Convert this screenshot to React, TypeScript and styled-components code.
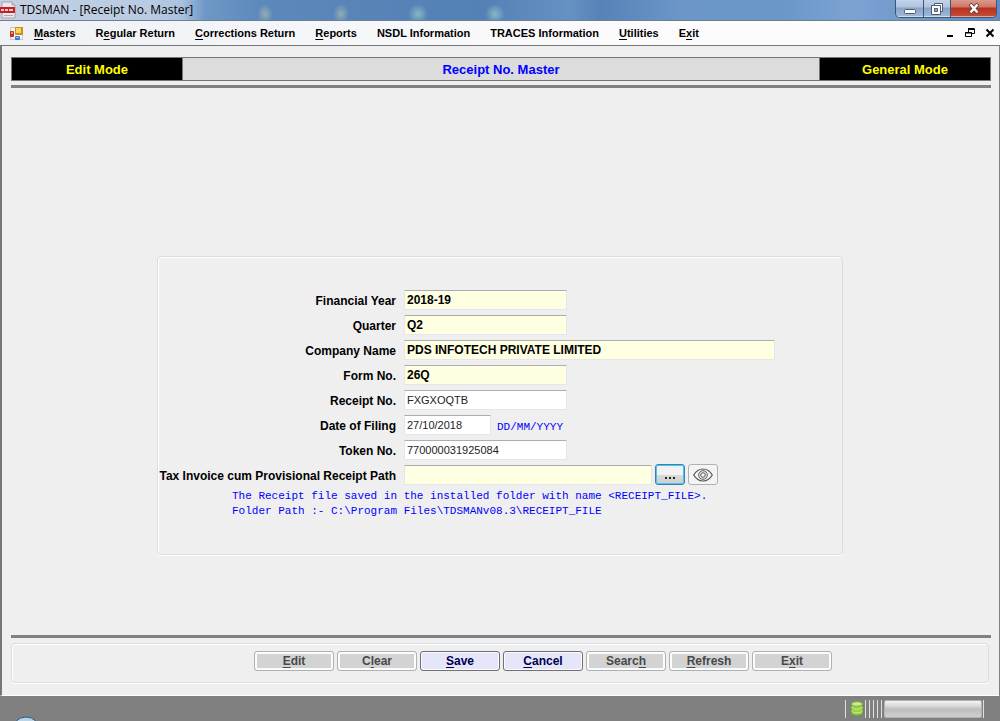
import React from "react";
import styled, { createGlobalStyle, css } from "styled-components";

const Global = createGlobalStyle`
  *, *::before, *::after { box-sizing: border-box; }
  body {
    margin: 0;
    background: #808080;
    font-family: "Liberation Sans", Arial, sans-serif;
    font-size: 12px;
    color: #000;
  }
  button, input { font: inherit; margin: 0; }
`;

const Window = styled.div`
  min-height: 100vh;
  display: flex;
  flex-direction: column;
`;

const TitleBar = styled.header`
  height: 21px;
  display: flex;
  align-items: flex-start;
  justify-content: space-between;
  border-bottom: 1px solid #6c7f95;
  background:
    radial-gradient(ellipse 8px 10px at 265px 14px, rgba(170, 190, 175, 0.7), transparent),
    radial-gradient(ellipse 8px 10px at 341px 14px, rgba(170, 190, 175, 0.7), transparent),
    radial-gradient(ellipse 10px 10px at 418px 14px, rgba(150, 195, 200, 0.8), transparent),
    radial-gradient(ellipse 10px 10px at 495px 14px, rgba(150, 195, 200, 0.8), transparent),
    linear-gradient(90deg, #c3d0e2 0, #b9cbe2 150px, #a9c1de 182px, #6f98c6 205px, #5c88bb 260px, #5380b5 480px, #6691c3 570px, #5682b8 600px, #6c96c8 680px, #6a96c8 780px, #7ba3d2 850px, #5f8cc2 100%);
`;

const Caption = styled.div`
  display: flex;
  align-items: center;
  gap: 4px;
  height: 20px;
  font-family: "Open Sans", "Noto Sans", sans-serif;
  font-size: 12px;
  line-height: 20px;
  white-space: nowrap;
`;

const WindowButtons = styled.div`
  display: flex;
  height: 18px;
  margin-right: 3px;
  border: 1px solid #3f5672;
  border-top: 0;
  border-radius: 0 0 5px 5px;
  overflow: hidden;
`;

const WindowButton = styled.button<{ $kind?: "close" }>`
  width: ${(p) => (p.$kind === "close" ? 46 : 27)}px;
  padding: 0;
  border: 0;
  display: flex;
  align-items: center;
  justify-content: center;
  box-shadow: inset 0 -1px 0 rgba(255, 255, 255, 0.5);
  background: ${(p) =>
    p.$kind === "close"
      ? "linear-gradient(#dc9a8c 0, #cf7767 7px, #b9301c 8px, #c84e38 100%)"
      : "linear-gradient(#c3d3e8 0, #b0c5df 7px, #87a4c8 8px, #a2bad8 100%)"};
  & + & { border-left: 1px solid #3f5672; }
`;

const MenuBar = styled.nav`
  height: 25px;
  display: flex;
  align-items: center;
  justify-content: space-between;
  padding: 0 3px 0 9px;
  background: linear-gradient(90deg, #eff1f5, #fcfcfd 70%);
  border-bottom: 1px solid #767676;
`;

const MenuItems = styled.div`
  display: flex;
  align-items: center;
`;

const MenuItem = styled.button`
  padding: 0 10px;
  border: 0;
  background: none;
  font-size: 11px;
  font-weight: 700;
  line-height: 20px;
  white-space: nowrap;
`;

const Mnemonic = styled.u`
  text-underline-offset: 2px;
`;

const ChildButtons = styled.div`
  display: flex;
  gap: 6px;
`;

const ChildButton = styled.button`
  width: 14px;
  height: 14px;
  padding: 0;
  border: 0;
  background: none;
  display: flex;
  align-items: center;
  justify-content: center;
`;

const Client = styled.main`
  flex: 1;
  display: flex;
  flex-direction: column;
  margin-right: 1px;
  padding: 11px 8px 12px 9px;
  background: #efefef;
  border-left: 2px solid #767676;
  border-bottom: 1px solid #fff;
`;

const ModeStrip = styled.div`
  display: grid;
  grid-template-columns: 170px 1fr 170px;
  height: 24px;
  border: 1px solid #767676;
  font-size: 13px;
  font-weight: 700;
  line-height: 20px;
  text-align: center;
`;

const Mode = styled.div`
  padding-top: 2px;
  background: #000;
  color: #ff0;
`;

const ScreenTitle = styled.h1`
  margin: 0;
  padding-top: 2px;
  font: inherit;
  color: #00f;
  background: #dcdcdc;
  border: solid #767676;
  border-width: 0 1px;
`;

const Rule = styled.hr`
  width: 100%;
  height: 3px;
  margin: 4px 0 0;
  border: 0;
  background: #808080;
`;

const Stage = styled.div`
  flex: 1;
  display: flex;
  align-items: center;
  justify-content: center;
  padding: 91px 2px 0 0;
`;

const groupFrame = css`
  border: 1px solid #d5dfe5;
  border-radius: 4px;
  box-shadow: inset 1px 1px 0 #fff, 0 1px 0 #fff;
`;

const Panel = styled.form`
  ${groupFrame}
  width: 686px;
  padding: 33px 0 20px;
`;

const Fields = styled.div`
  display: grid;
  grid-template-columns: 238px 1fr;
  column-gap: 8px;
  row-gap: 5px;
`;

const Label = styled.label`
  height: 20px;
  padding-top: 1px;
  font-weight: 700;
  line-height: 20px;
  text-align: right;
  white-space: nowrap;
`;

const Cell = styled.div`
  height: 20px;
  display: flex;
  align-items: center;
  gap: 3px;
`;

const Field = styled.input<{ $size: "date" | "short" | "path" | "long"; $locked?: boolean }>`
  width: ${(p) => ({ date: 87, short: 163, path: 248, long: 371 })[p.$size]}px;
  height: 20px;
  padding: 0 2px;
  border: 1px solid #e3e6ee;
  border-top-color: #abadb3;
  border-radius: 1px;
  outline: 0;
  background: ${(p) => (p.$locked ? "#ffffe1" : "#fff")};
  color: ${(p) => (p.$locked ? "#000" : "#222")};
  ${(p) => (p.$locked ? "font-weight: 700;" : "font-size: 11px;")}
`;

const Hint = styled.span`
  padding: 4px 0 0 3px;
  color: #00f;
  font-family: "Liberation Mono", monospace;
  font-size: 11px;
`;

const Note = styled.p`
  margin: 4px 0 0 74px;
  color: #00f;
  font-family: "Liberation Mono", monospace;
  font-size: 11px;
  line-height: 15px;
  min-height: 45px;
`;

const IconButton = styled.button<{ $focused?: boolean }>`
  width: 30px;
  height: 21px;
  padding: 0;
  display: flex;
  align-items: center;
  justify-content: center;
  border: 1px solid ${(p) => (p.$focused ? "#3c7fb1" : "#adb2b5")};
  border-radius: 3px;
  background: ${(p) => (p.$focused ? "linear-gradient(#f2f2f2 50%, #dadada 50%, #cfcfcf)" : "#f4f4f4")};
  box-shadow: ${(p) => (p.$focused ? "inset 0 0 0 1px #46c5ee" : "none")};
`;

const Actions = styled.div`
  ${groupFrame}
  display: flex;
  justify-content: center;
  gap: 3px;
  margin: 5px 2px 0 0;
  padding: 7px 0 11px 86px;
`;

const ActionButton = styled.button`
  width: 80px;
  height: 20px;
  padding: 0;
  border: 1px solid #707070;
  border-radius: 3px;
  background: #e6e6fa;
  box-shadow: inset 0 0 0 1px #fcfcfc;
  color: #000050;
  font-weight: 700;
  line-height: 18px;
  &:disabled {
    border-color: #adb2b5;
    background: #d3d3d3;
    box-shadow: inset 0 0 0 2px #fcfcfc;
    color: #484848;
  }
`;

const StatusBar = styled.footer`
  height: 25px;
  display: flex;
  align-items: center;
  justify-content: space-between;
  padding: 0 14px 0 12px;
  background: #808080;
`;

const Tray = styled.div`
  display: flex;
  align-items: center;
`;

const Meter = styled.div`
  width: 98px;
  height: 18px;
  border: 1px solid #b2b2b2;
  border-radius: 2px;
  background: linear-gradient(#f4f4f4, #d2d2d2 6px, #bdbdbd 8px, #cfcfcf);
`;

const Accel = ({ text, at }: { text: string; at: number }) => (
  <>
    {text.slice(0, at)}
    <Mnemonic>{text[at]}</Mnemonic>
    {text.slice(at + 1)}
  </>
);

const menus: [string, number | null][] = [
  ["Masters", 0],
  ["Regular Return", 1],
  ["Corrections Return", 0],
  ["Reports", 0],
  ["NSDL Information", null],
  ["TRACES Information", null],
  ["Utilities", 0],
  ["Exit", 1],
];

const actions: [string, number, boolean][] = [
  ["Edit", 0, false],
  ["Clear", 1, false],
  ["Save", 0, true],
  ["Cancel", 0, true],
  ["Search", 5, false],
  ["Refresh", 0, false],
  ["Exit", 1, false],
];

const AppIcon = () => (
  <svg width="16" height="18" viewBox="0 0 16 18">
    <path d="M2 1h10l3 3v13H2z" fill="#e9e9ea" stroke="#a5a5a8" />
    <path d="M12 1v3h3" fill="#c9c9cc" stroke="#a5a5a8" />
    <rect y="6" width="15" height="6" fill="#c8202a" />
    <path d="M1 9h3M5 9h3M9 9h4" stroke="#f2c9c9" strokeWidth="2" />
    <path d="M4 14.500h9" stroke="#aaa" />
  </svg>
);

const FormIcon = () => (
  <svg width="15" height="15" viewBox="0 0 15 15">
    <rect x="1.500" y="1.500" width="12" height="12" fill="#f6f6f6" stroke="#c5c8cf" />
    <rect x="1" y="5" width="4" height="6" rx="1" fill="#c4301e" />
    <rect x="2" y="6" width="2" height="2" fill="#f08a70" />
    <rect x="6" y="1" width="8" height="8" rx="1" fill="#c9901a" />
    <rect x="7" y="2" width="5" height="5" fill="#fbd65c" />
    <rect x="6" y="10" width="5" height="4" rx="1" fill="#3e76d8" />
    <rect x="7" y="11" width="3" height="1" fill="#9cc1f7" />
  </svg>
);

const EyeIcon = () => (
  <svg width="20" height="14" viewBox="0 0 20 14" fill="none" stroke="#555">
    <path d="M.7 7C3 3.200 6.200 1 10 1s7 2.200 9.300 6C17 10.800 13.800 13 10 13S3 10.800.7 7z" strokeWidth="1.200" />
    <circle cx="10" cy="7" r="4.300" />
    <circle cx="10" cy="7" r="2.300" />
  </svg>
);

const DatabaseIcon = () => (
  <svg width="16" height="15" viewBox="-3 0 16 15">
    <path d="M.5 3v9c0 3 11 3 11 0V3z" fill="#9ad04a" stroke="#6da52b" />
    <path d="M.5 6c0 3 11 3 11 0M.5 9.500c0 3 11 3 11 0" fill="none" stroke="#c4e68a" />
    <ellipse cx="6" cy="3" rx="5.500" ry="2.200" fill="#cdec8c" stroke="#7fb63c" />
  </svg>
);

const Grips = ({ count }: { count: number }) => (
  <svg width={count * 4} height="18">
    {Array.from({ length: count }, (_, i) => (
      <path key={i} d={`M${i * 4 + 1.5} 0v18`} stroke="#e0e0e0" />
    ))}
  </svg>
);

export default function App() {
  return (
    <Window>
      <Global />
      <TitleBar>
        <Caption>
          <AppIcon />
          TDSMAN - [Receipt No. Master]
        </Caption>
        <WindowButtons>
          <WindowButton aria-label="Minimize">
            <svg width="12" height="12" viewBox="0 0 12 12">
              <rect x=".5" y="6.500" width="11" height="4" rx="1" fill="#fff" stroke="#505c70" />
            </svg>
          </WindowButton>
          <WindowButton aria-label="Restore">
            <svg width="12" height="12" viewBox="0 0 12 12" fill="#fff" stroke="#505c70">
              <path d="M3.500.5h8v8h-8z" />
              <path d="M.5 2.500h9v9h-9z" />
              <path d="M3.500 5.500h3v3h-3z" fill="#8fa8c8" />
            </svg>
          </WindowButton>
          <WindowButton $kind="close" aria-label="Close">
            <svg width="12" height="11" viewBox="0 0 12 11">
              <path d="M2 1l8 9M10 1l-8 9" stroke="#5d3a40" strokeWidth="4" />
              <path d="M2.500 1.500l7 8M9.500 1.500l-7 8" stroke="#fff" strokeWidth="2.400" />
            </svg>
          </WindowButton>
        </WindowButtons>
      </TitleBar>

      <MenuBar>
        <MenuItems>
          <FormIcon />
          {menus.map(([text, at]) => (
            <MenuItem key={text}>{at === null ? text : <Accel text={text} at={at} />}</MenuItem>
          ))}
        </MenuItems>
        <ChildButtons>
          <ChildButton aria-label="Minimize form">
            <svg width="10" height="10">
              <path d="M2 8h6" stroke="#000" strokeWidth="2" />
            </svg>
          </ChildButton>
          <ChildButton aria-label="Restore form">
            <svg width="10" height="10" fill="none" stroke="#000">
              <path d="M3 .5h6.500M3 1.500h6.500M3.500 1v3M9.500 1v4.500H7M.5 4.500h6v4h-6zM0 5h7" />
            </svg>
          </ChildButton>
          <ChildButton aria-label="Close form">
            <svg width="10" height="10">
              <path d="M1.500 1.500l7 7M8.500 1.500l-7 7" stroke="#000" strokeWidth="2" />
            </svg>
          </ChildButton>
        </ChildButtons>
      </MenuBar>

      <Client>
        <ModeStrip>
          <Mode>Edit Mode</Mode>
          <ScreenTitle>Receipt No. Master</ScreenTitle>
          <Mode>General Mode</Mode>
        </ModeStrip>
        <Rule />

        <Stage>
          <Panel onSubmit={(e) => e.preventDefault()}>
            <Fields>
              <Label htmlFor="year">Financial Year</Label>
              <Cell>
                <Field id="year" $size="short" $locked readOnly value="2018-19" />
              </Cell>
              <Label htmlFor="quarter">Quarter</Label>
              <Cell>
                <Field id="quarter" $size="short" $locked readOnly value="Q2" />
              </Cell>
              <Label htmlFor="company">Company Name</Label>
              <Cell>
                <Field id="company" $size="long" $locked readOnly value="PDS INFOTECH PRIVATE LIMITED" />
              </Cell>
              <Label htmlFor="form">Form No.</Label>
              <Cell>
                <Field id="form" $size="short" $locked readOnly value="26Q" />
              </Cell>
              <Label htmlFor="receipt">Receipt No.</Label>
              <Cell>
                <Field id="receipt" $size="short" defaultValue="FXGXOQTB" />
              </Cell>
              <Label htmlFor="filed">Date of Filing</Label>
              <Cell>
                <Field id="filed" $size="date" defaultValue="27/10/2018" />
                <Hint>DD/MM/YYYY</Hint>
              </Cell>
              <Label htmlFor="token">Token No.</Label>
              <Cell>
                <Field id="token" $size="short" defaultValue="770000031925084" />
              </Cell>
              <Label htmlFor="path">Tax Invoice cum Provisional Receipt Path</Label>
              <Cell>
                <Field id="path" $size="path" $locked readOnly value="" />
                <IconButton type="button" $focused aria-label="Browse">
                  <svg width="12" height="10">
                    <path d="M1 8h2M5 8h2M9 8h2" stroke="#222" strokeWidth="2" />
                  </svg>
                </IconButton>
                <IconButton type="button" aria-label="View receipt">
                  <EyeIcon />
                </IconButton>
              </Cell>
            </Fields>
            <Note>
              The Receipt file saved in the installed folder with name &lt;RECEIPT_FILE&gt;.
              <br />
              Folder Path :- C:\Program Files\TDSMANv08.3\RECEIPT_FILE
            </Note>
          </Panel>
        </Stage>

        <Rule />
        <Actions>
          {actions.map(([text, at, enabled]) => (
            <ActionButton key={text} type="button" disabled={!enabled}>
              <Accel text={text} at={at} />
            </ActionButton>
          ))}
        </Actions>
      </Client>

      <StatusBar>
        <svg width="28" height="25" viewBox="0 0 28 25">
          <circle cx="14" cy="35" r="14" fill="#b9d4e8" stroke="#2c5a80" />
        </svg>
        <Tray>
          <Grips count={1} />
          <DatabaseIcon />
          <Grips count={5} />
          <Meter />
          <Grips count={1} />
        </Tray>
      </StatusBar>
    </Window>
  );
}
